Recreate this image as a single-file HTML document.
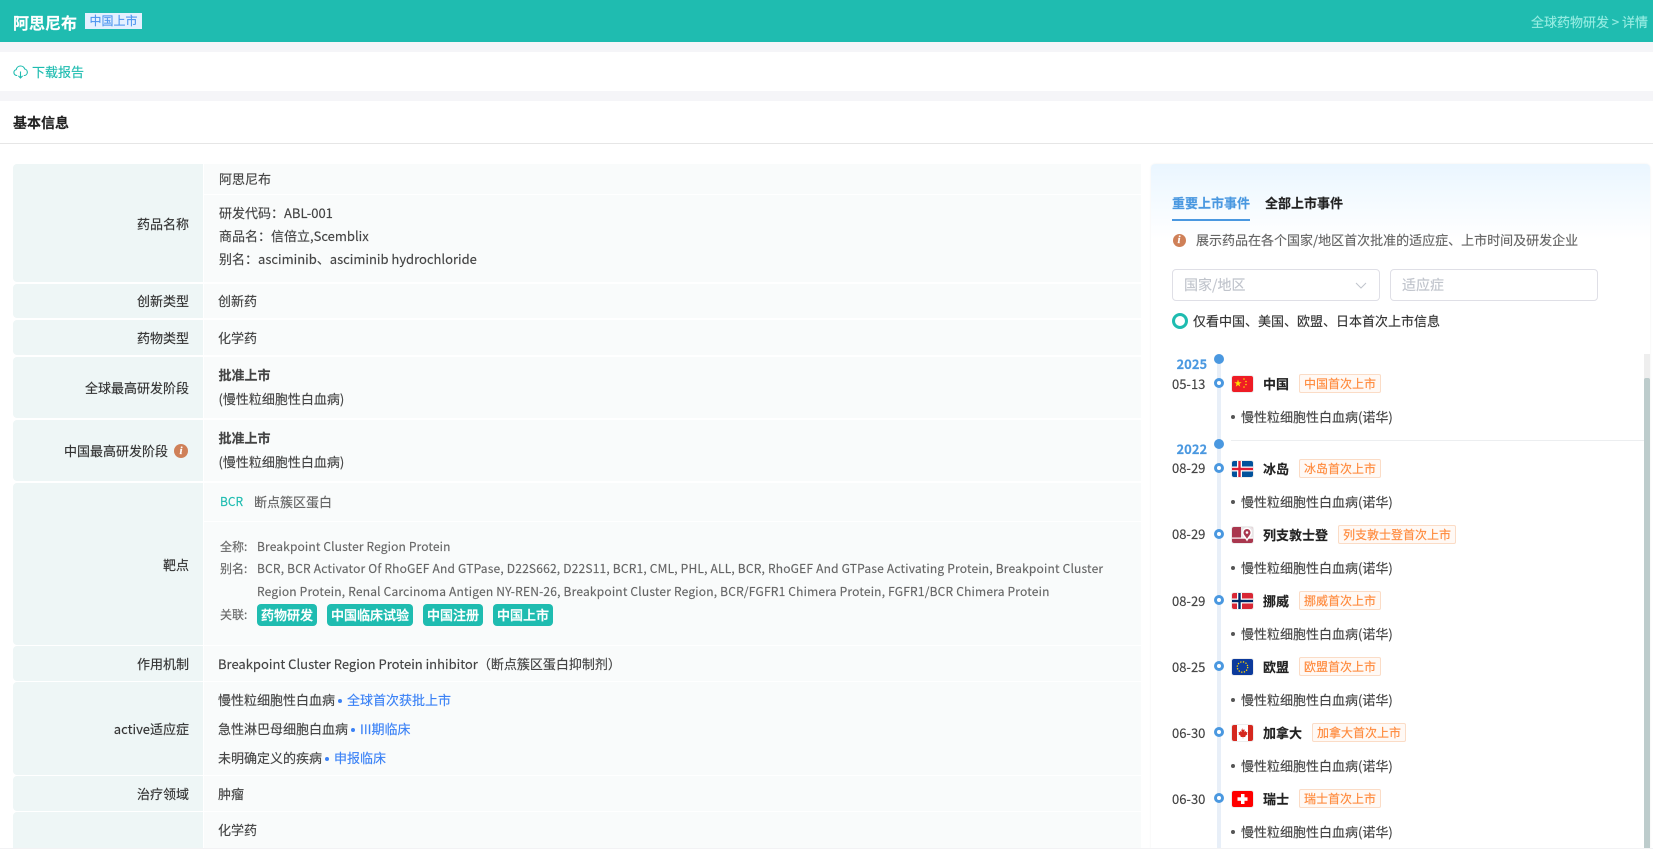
<!DOCTYPE html>
<html lang="zh-CN">
<head>
<meta charset="utf-8">
<title>阿思尼布</title>
<style>
html,body{margin:0;padding:0;background:#fff}
body{width:1653px;height:849px;position:relative;overflow:hidden;font-family:"Noto Sans CJK SC","Liberation Sans",sans-serif;font-size:13px;color:#333;-webkit-text-stroke:.15px}
.b{position:absolute}
.t{position:absolute;white-space:nowrap;line-height:20px;height:20px}
.l{position:absolute;left:13px;width:190px;background:#eef6f6;border-radius:4px 0 0 4px}
.v{position:absolute;left:204px;width:937px;background:#f9fbfb}
.lb{position:absolute;white-space:nowrap;line-height:20px;height:20px;right:1464px;color:#333}
.val{color:#444}
.sm{font-size:12px;color:#666}
.tag{position:absolute;top:604px;height:22px;line-height:21px;background:#1fbcb0;color:#fff;border-radius:4px;text-align:center;font-size:13px;font-weight:500;-webkit-text-stroke:.3px #fff}
.blue{color:#3b82f6}
.pt{display:inline-block;width:4px;height:4px;border-radius:50%;background:#3b82f6;margin:0 5px 0 3px;vertical-align:middle}
.date{position:absolute;left:1172px;width:34px;white-space:nowrap;line-height:20px;height:20px;font-size:13px;color:#444}
.dot{position:absolute;left:1214px;width:10px;height:10px;box-sizing:border-box;border:3px solid #4a98e0;border-radius:50%;background:#fff}
.big{position:absolute;left:1214px;width:10px;height:10px;border-radius:50%;background:#4a98e0}
.yr{position:absolute;left:1176.500px;white-space:nowrap;line-height:20px;height:20px;font-size:13px;font-weight:700;color:#4a98e0}
.flag{position:absolute;left:1232px;width:21px;height:16px;border-radius:2px;overflow:hidden;display:block;box-shadow:0 0 0 1px rgba(0,0,0,.07)}
.nm{position:absolute;left:1263px;white-space:nowrap;line-height:20px;height:20px;font-size:13px;font-weight:700;color:#222}
.ev{position:absolute;height:19px;line-height:18px;box-sizing:border-box;border:1px solid #fbdcc6;background:#fff9f5;color:#ff8a3c;font-size:12px;text-align:center;border-radius:2px;white-space:nowrap}
.bu{position:absolute;left:1231px;width:4px;height:4px;border-radius:50%;background:#555}
.dr{position:absolute;left:1241px;white-space:nowrap;line-height:20px;height:20px;font-size:13px;color:#444}
.ii{position:absolute;width:14px;height:14px;border-radius:50%;background:#cf8058;color:#fff;font:italic 700 11px/14px "Liberation Serif",serif;text-align:center}
</style>
</head>
<body>
<!-- header -->
<div class="b" style="left:0;top:0;width:1653px;height:42px;background:#1fbcb0"></div>
<div class="t" style="left:13px;top:12px;font-size:16px;font-weight:700;color:#fff">阿思尼布</div>
<div class="b" style="left:85px;top:13px;width:57px;height:16px;background:#e4f0ff;color:#4f95f0;font-size:12px;line-height:16px;text-align:center">中国上市</div>
<div class="t" style="left:1531px;top:12px;color:#95ece2">全球药物研发 &gt; 详情</div>

<div class="b" style="left:0;top:42px;width:1653px;height:10px;background:#f5f5f8"></div>
<div class="b" style="left:0;top:91px;width:1653px;height:10px;background:#f5f5f8"></div>

<svg class="b" style="left:13px;top:65px" width="15" height="14" viewBox="0 0 15 14" fill="none" stroke="#1fbcb0" stroke-width="1.1">
<path d="M4.2 10.5H3.6a3 3 0 0 1-.4-5.9A4.4 4.4 0 0 1 11.7 4a3.3 3.3 0 0 1-.2 6.5h-.7"/><path d="M7.5 6.5v6.5M5.4 10.9l2.1 2.1 2.1-2.1"/>
</svg>
<div class="t" style="left:32px;top:62px;color:#1fbcb0">下载报告</div>

<div class="t" style="left:13px;top:113px;font-size:14px;font-weight:700;color:#222">基本信息</div>
<div class="b" style="left:0;top:143px;width:1653px;height:1px;background:#e6e6e6"></div>

<!-- left table backgrounds -->
<div class="l" style="top:164px;height:118px"></div>
<div class="v" style="top:164px;height:30px"></div><div class="v" style="top:195px;height:87px"></div>
<div class="l" style="top:284px;height:34px"></div><div class="v" style="top:284px;height:34px"></div>
<div class="l" style="top:320px;height:35px"></div><div class="v" style="top:320px;height:35px"></div>
<div class="l" style="top:357px;height:61px"></div><div class="v" style="top:357px;height:61px"></div>
<div class="l" style="top:420px;height:61px"></div><div class="v" style="top:420px;height:61px"></div>
<div class="l" style="top:483px;height:162px"></div><div class="v" style="top:483px;height:38px"></div><div class="v" style="top:522px;height:123px"></div>
<div class="l" style="top:646px;height:35px"></div><div class="v" style="top:646px;height:35px"></div>
<div class="l" style="top:682px;height:93px"></div><div class="v" style="top:682px;height:93px"></div>
<div class="l" style="top:776px;height:35px"></div><div class="v" style="top:776px;height:35px"></div>
<div class="l" style="top:812px;height:36px;border-radius:4px 0 0 0"></div><div class="v" style="top:812px;height:36px"></div>

<!-- labels -->
<div class="lb" style="top:214px">药品名称</div>
<div class="lb" style="top:291px">创新类型</div>
<div class="lb" style="top:328px">药物类型</div>
<div class="lb" style="top:378px">全球最高研发阶段</div>
<div class="lb" style="top:441px;right:1485px">中国最高研发阶段</div>
<div class="ii" style="left:174px;top:444px">i</div>
<div class="lb" style="top:555px">靶点</div>
<div class="lb" style="top:654px">作用机制</div>
<div class="lb" style="top:719px">active适应症</div>
<div class="lb" style="top:784px">治疗领域</div>

<!-- values -->
<div class="t val" style="left:219px;top:169px">阿思尼布</div>
<div class="t val" style="left:219px;top:203px">研发代码：ABL-001</div>
<div class="t val" style="left:219px;top:226px">商品名：信倍立,Scemblix</div>
<div class="t val" style="left:219px;top:249px">别名：asciminib、asciminib hydrochloride</div>
<div class="t val" style="left:218px;top:291px">创新药</div>
<div class="t val" style="left:218px;top:328px">化学药</div>
<div class="t val" style="left:218.500px;top:365px;font-weight:700">批准上市</div>
<div class="t val" style="left:218.500px;top:389px">(慢性粒细胞性白血病)</div>
<div class="t val" style="left:218.500px;top:428px;font-weight:700">批准上市</div>
<div class="t val" style="left:218.500px;top:452px">(慢性粒细胞性白血病)</div>

<div class="t" style="left:220px;top:492px;font-size:12px;color:#1fbcb0">BCR</div>
<div class="t" style="left:254px;top:492px;color:#666">断点簇区蛋白</div>
<div class="t sm" style="left:220px;top:537px">全称:</div>
<div class="t sm" style="left:257px;top:537px;letter-spacing:.14px">Breakpoint Cluster Region Protein</div>
<div class="t sm" style="left:220px;top:559px">别名:</div>
<div class="t sm" style="left:257px;top:559px;letter-spacing:.19px">BCR, BCR Activator Of RhoGEF And GTPase, D22S662, D22S11, BCR1, CML, PHL, ALL, BCR, RhoGEF And GTPase Activating Protein, Breakpoint Cluster</div>
<div class="t sm" style="left:257px;top:582px;letter-spacing:.19px">Region Protein, Renal Carcinoma Antigen NY-REN-26, Breakpoint Cluster Region, BCR/FGFR1 Chimera Protein, FGFR1/BCR Chimera Protein</div>
<div class="t sm" style="left:220px;top:605px">关联:</div>
<div class="tag" style="left:257px;width:60px">药物研发</div>
<div class="tag" style="left:327px;width:86px">中国临床试验</div>
<div class="tag" style="left:423px;width:60px">中国注册</div>
<div class="tag" style="left:493px;width:60px">中国上市</div>

<div class="t val" style="left:218px;top:654px">Breakpoint Cluster Region Protein inhibitor（断点簇区蛋白抑制剂）</div>
<div class="t val" style="left:218px;top:690px">慢性粒细胞性白血病<i class="pt"></i><span class="blue">全球首次获批上市</span></div>
<div class="t val" style="left:218px;top:719px">急性淋巴母细胞白血病<i class="pt"></i><span class="blue">III期临床</span></div>
<div class="t val" style="left:218px;top:748px">未明确定义的疾病<i class="pt"></i><span class="blue">申报临床</span></div>
<div class="t val" style="left:218px;top:784px">肿瘤</div>
<div class="t val" style="left:218px;top:820px">化学药</div>

<!-- right panel -->
<div class="b" style="left:1151px;top:164px;width:499px;height:685px;background:linear-gradient(#eaf6ff 0,#fff 75px,#fff 100%);border-radius:4px 4px 0 0;box-shadow:0 0 2px rgba(0,0,0,.06)"></div>
<div class="t" style="left:1172px;top:193px;font-weight:700;color:#4a98e0">重要上市事件</div>
<div class="b" style="left:1172px;top:219px;width:78px;height:2px;background:#4a98e0"></div>
<div class="t" style="left:1265px;top:193px;font-weight:700;color:#222">全部上市事件</div>
<div class="ii" style="left:1172.500px;top:233.500px;width:13px;height:13px;line-height:13px">i</div>
<div class="t" style="left:1196px;top:230px;color:#666">展示药品在各个国家/地区首次批准的适应症、上市时间及研发企业</div>

<div class="b" style="left:1172px;top:269px;width:208px;height:32px;box-sizing:border-box;border:1px solid #dfdfe6;border-radius:4px;background:#fff"></div>
<div class="t" style="left:1184px;top:275px;font-size:14px;color:#c0c4cc">国家/地区</div>
<svg class="b" style="left:1355px;top:282px" width="12" height="7" viewBox="0 0 12 7" fill="none" stroke="#c0c4cc" stroke-width="1"><path d="M1 1l5 5 5-5"/></svg>
<div class="b" style="left:1390px;top:269px;width:208px;height:32px;box-sizing:border-box;border:1px solid #dfdfe6;border-radius:4px;background:#fff"></div>
<div class="t" style="left:1402px;top:275px;font-size:14px;color:#c0c4cc">适应症</div>

<div class="b" style="left:1172px;top:313px;width:16px;height:16px;box-sizing:border-box;border:3px solid #1fbcb0;border-radius:50%;background:#fff"></div>
<div class="t" style="left:1193px;top:311px;color:#333">仅看中国、美国、欧盟、日本首次上市信息</div>

<!-- scrollbar -->
<div class="b" style="left:1644px;top:354px;width:6px;height:494px;background:#eee"></div>
<div class="b" style="left:1644px;top:378px;width:6px;height:470px;background:#bdcccc;border-radius:2px 2px 0 0"></div>
<div class="b" style="left:1231px;top:440px;width:413px;height:1px;background:#eceef0"></div>

<!-- timeline -->
<div class="b" style="left:1217px;top:359px;width:4px;height:489px;background:#e8eff8"></div>
<div class="big" style="top:354px"></div>
<div class="yr" style="top:354px">2025</div>
<div class="big" style="top:439px"></div>
<div class="yr" style="top:439px">2022</div>

<!-- 中国 -->
<div class="date" style="top:374px">05-13</div><div class="dot" style="top:378px"></div>
<svg class="flag" style="top:376px" viewBox="0 0 21 16"><rect width="21" height="16" fill="#ee1c25"/><path d="M6 3.5l.9 2.7h2.8l-2.3 1.7.9 2.7L6 9l-2.3 1.6.9-2.7-2.3-1.7h2.8z" fill="#ffde00"/><g fill="#ffde00"><circle cx="12" cy="3" r=".8"/><circle cx="14" cy="5.5" r=".8"/><circle cx="14" cy="8.5" r=".8"/><circle cx="12" cy="11" r=".8"/></g></svg>
<div class="nm" style="top:374px">中国</div>
<div class="ev" style="left:1299px;top:374px;width:82px">中国首次上市</div>
<div class="bu" style="top:415px"></div><div class="dr" style="top:407px">慢性粒细胞性白血病(诺华)</div>

<!-- 冰岛 -->
<div class="date" style="top:458px">08-29</div><div class="dot" style="top:463px"></div>
<svg class="flag" style="top:461px" viewBox="0 0 21 16"><rect width="21" height="16" fill="#02529c"/><rect x="5" width="5" height="16" fill="#fff"/><rect y="5.5" width="21" height="5" fill="#fff"/><rect x="6.3" width="2.4" height="16" fill="#dc1e35"/><rect y="6.8" width="21" height="2.4" fill="#dc1e35"/></svg>
<div class="nm" style="top:459px">冰岛</div>
<div class="ev" style="left:1299px;top:459px;width:82px">冰岛首次上市</div>
<div class="bu" style="top:500px"></div><div class="dr" style="top:492px">慢性粒细胞性白血病(诺华)</div>

<!-- 列支敦士登 -->
<div class="date" style="top:524px">08-29</div><div class="dot" style="top:529px"></div>
<svg class="flag" style="top:527px" viewBox="0 0 21 16"><rect width="21" height="16" fill="#a9374e"/><rect x="9" width="12" height="11" fill="#e9e4e6"/><rect y="10.500" width="21" height="1.200" fill="#fff"/><path d="M10 5.500a5 5 0 0 1 10 0c0 3.500-3 5-5 9-2-4-5-5.500-5-9z" fill="#fff"/><path d="M11.500 5.500a3.500 3.500 0 0 1 7 0c0 2.300-2 3.600-3.500 6.300-1.500-2.700-3.500-4-3.500-6.300z" fill="#a9374e"/><circle cx="15" cy="5.500" r="1.300" fill="#fff"/></svg>
<div class="nm" style="top:525px">列支敦士登</div>
<div class="ev" style="left:1338px;top:525px;width:118px">列支敦士登首次上市</div>
<div class="bu" style="top:566px"></div><div class="dr" style="top:558px">慢性粒细胞性白血病(诺华)</div>

<!-- 挪威 -->
<div class="date" style="top:591px">08-29</div><div class="dot" style="top:595px"></div>
<svg class="flag" style="top:593px" viewBox="0 0 21 16"><rect width="21" height="16" fill="#d82735"/><rect x="5" width="5" height="16" fill="#fff"/><rect y="5.500" width="21" height="5" fill="#fff"/><rect x="6.300" width="2.400" height="16" fill="#002868"/><rect y="6.800" width="21" height="2.400" fill="#002868"/></svg>
<div class="nm" style="top:591px">挪威</div>
<div class="ev" style="left:1299px;top:591px;width:82px">挪威首次上市</div>
<div class="bu" style="top:632px"></div><div class="dr" style="top:624px">慢性粒细胞性白血病(诺华)</div>

<!-- 欧盟 -->
<div class="date" style="top:657px">08-25</div><div class="dot" style="top:661px"></div>
<svg class="flag" style="top:659px" viewBox="0 0 21 16"><rect width="21" height="16" fill="#0c3a9c"/><circle cx="10.500" cy="8" r="5.200" fill="none" stroke="#ffd500" stroke-width="1.300" stroke-dasharray="1.300 1.450"/></svg>
<div class="nm" style="top:657px">欧盟</div>
<div class="ev" style="left:1299px;top:657px;width:82px">欧盟首次上市</div>
<div class="bu" style="top:698px"></div><div class="dr" style="top:690px">慢性粒细胞性白血病(诺华)</div>

<!-- 加拿大 -->
<div class="date" style="top:723px">06-30</div><div class="dot" style="top:727px"></div>
<svg class="flag" style="top:725px" viewBox="0 0 21 16"><rect width="21" height="16" fill="#fff"/><rect width="5" height="16" fill="#d5281f"/><rect x="16" width="5" height="16" fill="#d5281f"/><path d="M10.500 3l1 2 1.200-.6-.4 2.600 1.400-1 .5 1.200 1.300-.2-.5 1.700.6.400-2.400 1.900.3 1h-2.300V13.500h-.4V12h-2.300l.3-1-2.400-1.900.6-.4-.5-1.700 1.300.2.500-1.200 1.400 1-.4-2.600 1.200.6z" fill="#d5281f"/></svg>
<div class="nm" style="top:723px">加拿大</div>
<div class="ev" style="left:1312px;top:723px;width:94px">加拿大首次上市</div>
<div class="bu" style="top:764px"></div><div class="dr" style="top:756px">慢性粒细胞性白血病(诺华)</div>

<!-- 瑞士 -->
<div class="date" style="top:789px">06-30</div><div class="dot" style="top:793px"></div>
<svg class="flag" style="top:791px" viewBox="0 0 21 16"><rect width="21" height="16" fill="#f00"/><rect x="9" y="3" width="3.500" height="10" fill="#fff"/><rect x="5.500" y="6.300" width="10" height="3.500" fill="#fff"/></svg>
<div class="nm" style="top:789px">瑞士</div>
<div class="ev" style="left:1299px;top:789px;width:82px">瑞士首次上市</div>
<div class="bu" style="top:830px"></div><div class="dr" style="top:822px">慢性粒细胞性白血病(诺华)</div>

<div class="b" style="left:0;top:848px;width:1653px;height:1px;background:#f2f2f4"></div>
</body>
</html>
